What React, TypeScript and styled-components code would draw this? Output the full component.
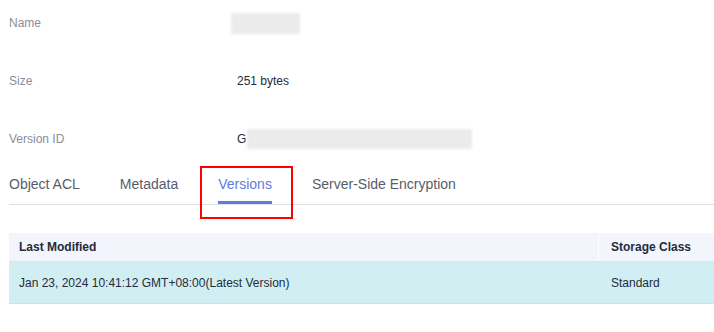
import React from "react";
import styled, { createGlobalStyle } from "styled-components";

const Global = createGlobalStyle`
  html, body { margin: 0; padding: 0; background: #fff; }
  body { font-family: "Liberation Sans", Arial, sans-serif; overflow: hidden; }
`;

const Page = styled.div`
  width: 714px;
  height: 332px;
  padding-left: 9px;
  box-sizing: border-box;
  display: flex;
  flex-direction: column;
`;

const InfoList = styled.div`
  display: flex;
  flex-direction: column;
  padding-top: 13px;
  gap: 38px;
`;

const InfoRow = styled.div`
  display: flex;
  align-items: center;
  height: 20px;
  font-size: 12px;
`;

const Label = styled.div`
  width: 228px;
  color: #8a8e99;
`;

const Value = styled.div`
  display: flex;
  align-items: center;
  color: #252b3a;
`;

const Blur = styled.div<{ $w: number; $h: number; $shift?: number }>`
  width: ${(p) => p.$w}px;
  height: ${(p) => p.$h}px;
  margin-left: ${(p) => p.$shift ?? 0}px;
  background: #ebebeb;
  filter: blur(1.5px);
`;

const TabBar = styled.div`
  display: flex;
  gap: 40px;
  margin-top: 25px;
  border-bottom: 1px solid #dfe1e6;
`;

const Tab = styled.div<{ $active?: boolean }>`
  position: relative;
  font-size: 14px;
  line-height: 20px;
  padding-bottom: 7px;
  color: ${(p) => (p.$active ? "#5e7ce0" : "#575d6c")};
  border-bottom: 3px solid ${(p) => (p.$active ? "#5e7ce0" : "transparent")};
`;

const Highlight = styled.div`
  position: absolute;
  left: -18px;
  right: -21px;
  top: -8px;
  bottom: -18px;
  border: 2px solid #ff0000;
`;

const Table = styled.div`
  margin-top: 28px;
  display: flex;
  flex-direction: column;
  font-size: 12px;
  color: #252b3a;
`;

const HeaderRow = styled.div`
  display: grid;
  grid-template-columns: 589px 1fr;
  height: 28px;
  background: #f2f5fc;
  border-bottom: 1px solid #dfe1e6;
  font-weight: bold;
`;

const BodyRow = styled.div`
  display: grid;
  grid-template-columns: 589px 1fr;
  height: 41px;
  background: #d1eef2;
  border-bottom: 1px solid #c9e4e8;
`;

const Cell = styled.div<{ $divider?: boolean }>`
  display: flex;
  align-items: center;
  padding-left: ${(p) => (p.$divider ? 12 : 10)}px;
  border-left: ${(p) => (p.$divider ? "1px solid #ffffff" : "none")};
`;

const BodyCell = styled.div<{ $second?: boolean }>`
  display: flex;
  align-items: center;
  padding-left: ${(p) => (p.$second ? 13 : 10)}px;
`;

export default function App() {
  return (
    <>
      <Global />
      <Page>
        <InfoList>
          <InfoRow>
            <Label>Name</Label>
            <Value>
              <Blur $w={69} $h={21} $shift={-6} />
            </Value>
          </InfoRow>
          <InfoRow>
            <Label>Size</Label>
            <Value>251 bytes</Value>
          </InfoRow>
          <InfoRow>
            <Label>Version ID</Label>
            <Value>
              G
              <Blur $w={225} $h={20} $shift={1} />
            </Value>
          </InfoRow>
        </InfoList>
        <TabBar>
          <Tab>Object ACL</Tab>
          <Tab>Metadata</Tab>
          <Tab $active>
            Versions
            <Highlight />
          </Tab>
          <Tab>Server-Side Encryption</Tab>
        </TabBar>
        <Table>
          <HeaderRow>
            <Cell>Last Modified</Cell>
            <Cell $divider>Storage Class</Cell>
          </HeaderRow>
          <BodyRow>
            <BodyCell>Jan 23, 2024 10:41:12 GMT+08:00(Latest Version)</BodyCell>
            <BodyCell $second>Standard</BodyCell>
          </BodyRow>
        </Table>
      </Page>
    </>
  );
}
